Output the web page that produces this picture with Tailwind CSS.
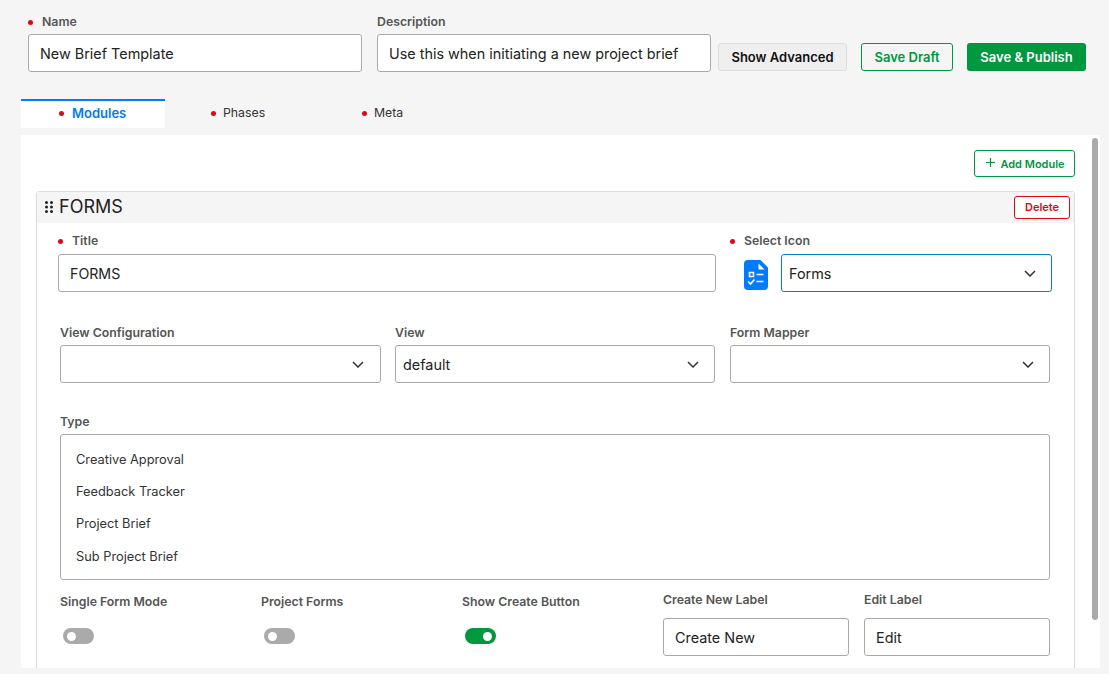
<!DOCTYPE html>
<html lang="en">
<head>
    <meta charset="UTF-8">
    <meta name="viewport" content="width=device-width, initial-scale=1.0">
    <title>New Brief Template</title>
    <script src="https://cdn.jsdelivr.net/npm/@tailwindcss/browser@4"></script>
</head>
<body class="bg-[#f5f5f5] h-[674px] overflow-hidden font-['Inter',sans-serif] text-[#222]">
    <!-- Header -->
    <div class="flex items-start pl-[28px] pt-[15px] h-[99px]">
        <div class="w-[334px]">
            <div class="flex items-center h-[14px] text-[12.3px] font-semibold text-[#555]">
                <span class="w-[5px] h-[5px] rounded-full bg-[#e30613] mr-[9px]"></span>Name
            </div>
            <div class="mt-[5px] h-[38px] flex items-center px-[11px] pt-[2px] bg-white border border-[#aaa] rounded-[3px] text-[14.4px]">New Brief Template</div>
        </div>
        <div class="w-[334px] ml-[15px]">
            <div class="flex items-center h-[14px] text-[12.3px] font-semibold text-[#555]">Description</div>
            <div class="mt-[5px] h-[38px] flex items-center px-[11px] pt-[2px] bg-white border border-[#aaa] rounded-[3px] text-[14.4px] whitespace-nowrap">Use this when initiating a new project brief</div>
        </div>
        <div class="ml-[7px] mt-[28px] w-[129px] h-[28px] flex items-center justify-center pt-[1px] bg-[#efefef] border border-[#ddd] rounded-[3px] text-[13px] font-semibold text-[#111]">Show Advanced</div>
        <div class="ml-[14px] mt-[28px] w-[92px] h-[28px] flex items-center justify-center pt-[1px] border border-[#00983f] rounded-[3px] text-[13px] font-semibold text-[#00983f]">Save Draft</div>
        <div class="ml-[14px] mt-[28px] w-[119px] h-[28px] flex items-center justify-center pt-[1px] bg-[#00983f] rounded-[3px] text-[13px] font-semibold text-white">Save &amp; Publish</div>
    </div>

    <!-- Tabs -->
    <div class="flex ml-[21px] h-[29px] text-[12.3px]">
        <div class="w-[144px] bg-white border-t-2 border-[#007bff] flex items-center pl-[38px] pb-[1px] text-[13px] font-semibold text-[#007bff]">
            <span class="w-[5px] h-[5px] rounded-full bg-[#e30613] mr-[8px] mb-[2px]"></span>Modules
        </div>
        <div class="w-[151px] flex items-center pl-[46px] text-[#333]">
            <span class="w-[5px] h-[5px] rounded-full bg-[#e30613] mr-[7px]"></span>Phases
        </div>
        <div class="flex items-center pl-[46px] text-[#333]">
            <span class="w-[5px] h-[5px] rounded-full bg-[#e30613] mr-[7px]"></span>Meta
        </div>
    </div>

    <!-- Panel -->
    <div class="relative ml-[21px] mt-[7px] w-[1079px] h-[533px] bg-white overflow-hidden pl-[15px] pr-[25px] pt-[15px]">
        <div class="absolute right-[2px] top-[3px] w-[6px] h-[482px] rounded-full bg-[#aaa]"></div>
        <div class="flex justify-end">
            <div class="w-[101px] h-[27px] flex items-center justify-center pt-[1px] pl-[2px] border border-[#00983f] rounded-[3px] text-[11px] font-semibold text-[#00983f]">
                <svg class="w-[9px] h-[9px] mr-[5px] mb-[3px]" viewBox="0 0 9 9" fill="none" stroke="#00983f" stroke-width="1.2"><path d="M4.5 0v9M0 4.5h9"/></svg>Add Module
            </div>
        </div>
        <!-- Module card -->
        <div class="mt-[14px] h-[520px] border border-[#ddd] rounded-t-[3px]">
            <div class="h-[31px] bg-[#f5f5f5] flex items-center justify-between pl-[8px] pr-[4px]">
                <div class="flex items-center pb-[2px]">
                    <svg class="w-[8px] h-[12px] mr-[6px]" viewBox="0 0 8 12" fill="#222"><circle cx="1.5" cy="1.5" r="1.5"/><circle cx="6.5" cy="1.5" r="1.5"/><circle cx="1.5" cy="6" r="1.5"/><circle cx="6.5" cy="6" r="1.5"/><circle cx="1.5" cy="10.5" r="1.5"/><circle cx="6.5" cy="10.5" r="1.5"/></svg>
                    <span class="text-[18px] text-[#222]">FORMS</span>
                </div>
                <div class="w-[56px] h-[23px] flex items-center justify-center bg-white border border-[#e30613] rounded-[3px] text-[11px] font-semibold text-[#e30613]">Delete</div>
            </div>

            <div class="pl-[21px] pr-[22px]">
                <!-- Title / icon -->
                <div class="flex pt-[11px]">
                    <div class="w-[658px]">
                        <div class="flex items-center h-[14px] text-[12.3px] font-semibold text-[#555]">
                            <span class="w-[5px] h-[5px] rounded-full bg-[#e30613] mr-[9px]"></span>Title
                        </div>
                        <div class="mt-[6px] h-[38px] flex items-center px-[11px] pt-[2px] border border-[#aaa] rounded-[3px] text-[14.2px]">FORMS</div>
                    </div>
                    <div class="ml-[14px]">
                        <div class="flex items-center h-[14px] text-[12.3px] font-semibold text-[#555]">
                            <span class="w-[5px] h-[5px] rounded-full bg-[#e30613] mr-[9px]"></span>Select Icon
                        </div>
                        <div class="flex items-center mt-[6px]">
                            <svg class="ml-[14px] mt-[4px] w-[24px] h-[30px]" viewBox="0 0 24 30">
                                <path fill="#007bff" d="M4 0h12.5L24 7.5V26a4 4 0 0 1-4 4H4a4 4 0 0 1-4-4V4a4 4 0 0 1 4-4z"/>
                                <path fill="#fff" d="M14.5 3.5l6 6h-6z"/>
                                <rect x="5.5" y="12.5" width="4" height="4" fill="none" stroke="#fff" stroke-width="1.5"/>
                                <path fill="none" stroke="#fff" stroke-width="1.7" d="M12.5 14.5h7M12.5 21.5h7M4.2 21.5l2.3 2.5 4-4.5"/>
                            </svg>
                            <div class="ml-[13px] w-[271px] h-[38px] flex items-center justify-between pl-[7px] pr-[15px] border border-[#0a7fc0] rounded-[3px] text-[14.4px]">
                                <span class="pt-[2px]">Forms</span>
                                <svg class="w-[12px] h-[7px]" viewBox="0 0 12 7" fill="none" stroke="#333" stroke-width="1.5"><path d="M1 1l5 5 5-5"/></svg>
                            </div>
                        </div>
                    </div>
                </div>

                <!-- Selects -->
                <div class="grid grid-cols-[321px_320px_320px] gap-x-[14px] ml-[2px] mt-[34px]">
                    <div>
                        <div class="h-[14px] flex items-center text-[12.3px] font-semibold text-[#555]">View Configuration</div>
                        <div class="mt-[5px] h-[38px] flex items-center justify-end pr-[16px] border border-[#aaa] rounded-[3px]">
                            <svg class="w-[12px] h-[7px]" viewBox="0 0 12 7" fill="none" stroke="#333" stroke-width="1.5"><path d="M1 1l5 5 5-5"/></svg>
                        </div>
                    </div>
                    <div>
                        <div class="h-[14px] flex items-center text-[12.3px] font-semibold text-[#555]">View</div>
                        <div class="mt-[5px] h-[38px] flex items-center justify-between pl-[7px] pr-[15px] border border-[#aaa] rounded-[3px] text-[14.4px]">
                            <span class="pt-[2px]">default</span>
                            <svg class="w-[12px] h-[7px]" viewBox="0 0 12 7" fill="none" stroke="#333" stroke-width="1.5"><path d="M1 1l5 5 5-5"/></svg>
                        </div>
                    </div>
                    <div class="ml-[1px] w-[320px]">
                        <div class="h-[14px] flex items-center text-[12.3px] font-semibold text-[#555]">Form Mapper</div>
                        <div class="mt-[5px] h-[38px] flex items-center justify-end pr-[15px] border border-[#aaa] rounded-[3px]">
                            <svg class="w-[12px] h-[7px]" viewBox="0 0 12 7" fill="none" stroke="#333" stroke-width="1.5"><path d="M1 1l5 5 5-5"/></svg>
                        </div>
                    </div>
                </div>

                <!-- Type -->
                <div class="ml-[2px] w-[990px] mt-[32px]">
                    <div class="h-[14px] flex items-center text-[12.3px] font-semibold text-[#555]">Type</div>
                    <div class="mt-[5px] h-[146px] border border-[#aaa] rounded-[3px] pl-[15px] pt-[9px] text-[12.8px] text-[#333]">
                        <div class="h-[32px] flex items-center">Creative Approval</div>
                        <div class="h-[32px] flex items-center">Feedback Tracker</div>
                        <div class="h-[32px] flex items-center">Project Brief</div>
                        <div class="h-[34px] flex items-center">Sub Project Brief</div>
                    </div>
                </div>

                <!-- Bottom row -->
                <div class="flex ml-[2px]">
                    <div class="w-[201px] pt-[15px]">
                        <div class="h-[14px] flex items-center text-[12.3px] font-semibold text-[#555]">Single Form Mode</div>
                        <div class="mt-[19px] ml-[3px] w-[31px] h-[16px] rounded-full bg-[#aaa] flex items-center pl-[4px]"><span class="w-[9px] h-[9px] rounded-full bg-white"></span></div>
                    </div>
                    <div class="w-[201px] pt-[15px]">
                        <div class="h-[14px] flex items-center text-[12.3px] font-semibold text-[#555]">Project Forms</div>
                        <div class="mt-[19px] ml-[3px] w-[31px] h-[16px] rounded-full bg-[#aaa] flex items-center pl-[4px]"><span class="w-[9px] h-[9px] rounded-full bg-white"></span></div>
                    </div>
                    <div class="w-[201px] pt-[15px]">
                        <div class="h-[14px] flex items-center text-[12.3px] font-semibold text-[#555]">Show Create Button</div>
                        <div class="mt-[19px] ml-[3px] w-[31px] h-[16px] rounded-full bg-[#00983f] flex items-center justify-end pr-[4px]"><span class="w-[9px] h-[9px] rounded-full bg-white"></span></div>
                    </div>
                    <div class="w-[186px] pt-[13px]">
                        <div class="h-[14px] flex items-center text-[12.3px] font-semibold text-[#555]">Create New Label</div>
                        <div class="mt-[11px] h-[38px] flex items-center px-[11px] pt-[2px] border border-[#aaa] rounded-[3px] text-[14.4px]">Create New</div>
                    </div>
                    <div class="w-[186px] ml-[15px] pt-[13px]">
                        <div class="h-[14px] flex items-center text-[12.3px] font-semibold text-[#555]">Edit Label</div>
                        <div class="mt-[11px] h-[38px] flex items-center px-[11px] pt-[2px] border border-[#aaa] rounded-[3px] text-[14.4px]">Edit</div>
                    </div>
                </div>
            </div>
        </div>
    </div>
</body>
</html>
